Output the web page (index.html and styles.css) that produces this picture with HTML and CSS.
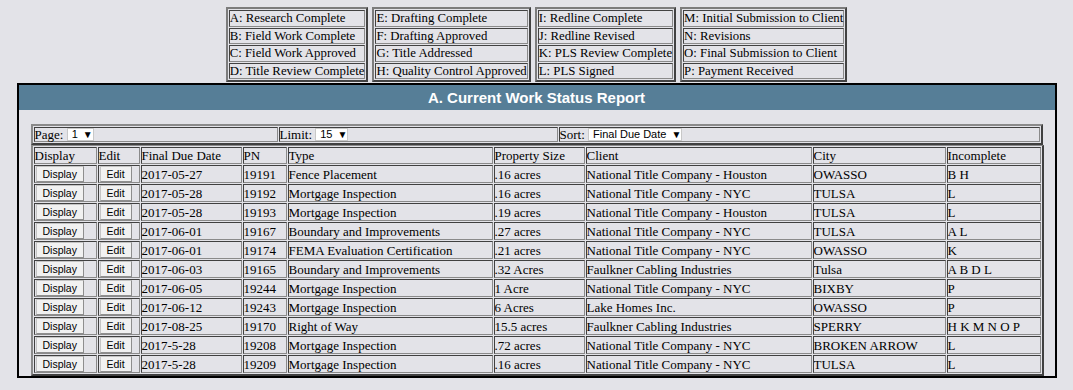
FILE: index.html
```html
<!DOCTYPE html>
<html>
<head>
<meta charset="utf-8">
<title>Current Work Status Report</title>
<link rel="stylesheet" href="styles.css">
</head>
<body>
<div class="legend">
  <table class="key">
    <tr><td>A: Research Complete</td></tr>
    <tr><td>B: Field Work Complete</td></tr>
    <tr><td>C: Field Work Approved</td></tr>
    <tr><td>D: Title Review Complete</td></tr>
  </table>
  <table class="key">
    <tr><td>E: Drafting Complete</td></tr>
    <tr><td>F: Drafting Approved</td></tr>
    <tr><td>G: Title Addressed</td></tr>
    <tr><td>H: Quality Control Approved</td></tr>
  </table>
  <table class="key">
    <tr><td>I: Redline Complete</td></tr>
    <tr><td>J: Redline Revised</td></tr>
    <tr><td>K: PLS Review Complete</td></tr>
    <tr><td>L: PLS Signed</td></tr>
  </table>
  <table class="key">
    <tr><td>M: Initial Submission to Client</td></tr>
    <tr><td>N: Revisions</td></tr>
    <tr><td>O: Final Submission to Client</td></tr>
    <tr><td>P: Payment Received</td></tr>
  </table>
</div>

<div class="report">
  <div class="report-title">A. Current Work Status Report</div>
  <div class="report-body">
    <table class="nav">
      <tr>
        <td class="nav-page">Page: <span class="select sel-page">1 <span class="arrow">▼</span></span></td>
        <td class="nav-limit">Limit: <span class="select sel-limit">15 <span class="arrow">▼</span></span></td>
        <td class="nav-sort">Sort: <span class="select sel-sort">Final Due Date <span class="arrow">▼</span></span></td>
      </tr>
    </table>
    <table class="grid">
      <colgroup>
        <col class="c-display"><col class="c-edit"><col class="c-date"><col class="c-pn"><col class="c-type"><col class="c-size"><col class="c-client"><col class="c-city"><col class="c-inc">
      </colgroup>
      <tr><td>Display</td><td>Edit</td><td>Final Due Date</td><td>PN</td><td>Type</td><td>Property Size</td><td>Client</td><td>City</td><td>Incomplete</td></tr>
      <tr><td><button class="btn">Display</button></td><td><button class="btn">Edit</button></td><td>2017-05-27</td><td>19191</td><td>Fence Placement</td><td>.16 acres</td><td>National Title Company - Houston</td><td>OWASSO</td><td>B H</td></tr>
      <tr><td><button class="btn">Display</button></td><td><button class="btn">Edit</button></td><td>2017-05-28</td><td>19192</td><td>Mortgage Inspection</td><td>.16 acres</td><td>National Title Company - NYC</td><td>TULSA</td><td>L</td></tr>
      <tr><td><button class="btn">Display</button></td><td><button class="btn">Edit</button></td><td>2017-05-28</td><td>19193</td><td>Mortgage Inspection</td><td>.19 acres</td><td>National Title Company - Houston</td><td>TULSA</td><td>L</td></tr>
      <tr><td><button class="btn">Display</button></td><td><button class="btn">Edit</button></td><td>2017-06-01</td><td>19167</td><td>Boundary and Improvements</td><td>.27 acres</td><td>National Title Company - NYC</td><td>TULSA</td><td>A L</td></tr>
      <tr><td><button class="btn">Display</button></td><td><button class="btn">Edit</button></td><td>2017-06-01</td><td>19174</td><td>FEMA Evaluation Certification</td><td>.21 acres</td><td>National Title Company - NYC</td><td>OWASSO</td><td>K</td></tr>
      <tr><td><button class="btn">Display</button></td><td><button class="btn">Edit</button></td><td>2017-06-03</td><td>19165</td><td>Boundary and Improvements</td><td>.32 Acres</td><td>Faulkner Cabling Industries</td><td>Tulsa</td><td>A B D L</td></tr>
      <tr><td><button class="btn">Display</button></td><td><button class="btn">Edit</button></td><td>2017-06-05</td><td>19244</td><td>Mortgage Inspection</td><td>1 Acre</td><td>National Title Company - NYC</td><td>BIXBY</td><td>P</td></tr>
      <tr><td><button class="btn">Display</button></td><td><button class="btn">Edit</button></td><td>2017-06-12</td><td>19243</td><td>Mortgage Inspection</td><td>6 Acres</td><td>Lake Homes Inc.</td><td>OWASSO</td><td>P</td></tr>
      <tr><td><button class="btn">Display</button></td><td><button class="btn">Edit</button></td><td>2017-08-25</td><td>19170</td><td>Right of Way</td><td>15.5 acres</td><td>Faulkner Cabling Industries</td><td>SPERRY</td><td>H K M N O P</td></tr>
      <tr><td><button class="btn">Display</button></td><td><button class="btn">Edit</button></td><td>2017-5-28</td><td>19208</td><td>Mortgage Inspection</td><td>.72 acres</td><td>National Title Company - NYC</td><td>BROKEN ARROW</td><td>L</td></tr>
      <tr><td><button class="btn">Display</button></td><td><button class="btn">Edit</button></td><td>2017-5-28</td><td>19209</td><td>Mortgage Inspection</td><td>.16 acres</td><td>National Title Company - NYC</td><td>TULSA</td><td>L</td></tr>
    </table>
  </div>
</div>
</body>
</html>
```

FILE: styles.css
```css
html, body {
  margin: 0;
  padding: 0;
}
body {
  padding-top: 7px;
  background: #e3e3e8;
  color: #000;
  font-family: "Liberation Serif", "Times New Roman", serif;
  font-size: 13px;
}

/* Status key legend */
.legend {
  display: flex;
  justify-content: center;
  align-items: flex-start;
  gap: 4px;
}
.key {
  border: 2px solid;
  border-color: #7c7c7c #424242 #424242 #7c7c7c;
  border-spacing: 1px;
  font-size: 12.8px;
}
.key td {
  border: 1px solid;
  border-color: #424242 #8a8a8a #8a8a8a #424242;
  padding: 0;
  height: 14.5px;
  line-height: 14.5px;
  white-space: nowrap;
}

/* Report box */
.report {
  width: 1036px;
  margin: 1px auto 0;
  border: 2px solid #000;
}
.report-title {
  background: #567e97;
  color: #fff;
  font-family: "Liberation Sans", Arial, sans-serif;
  font-weight: bold;
  font-size: 15px;
  height: 25px;
  line-height: 25px;
  text-align: center;
}
.report-body {
  padding: 14px 12px 0;
}

.nav,
.grid {
  width: 100%;
  border: 2px solid;
  border-color: #8a8a8a #404040 #404040 #8a8a8a;
  border-spacing: 1px;
}
.grid {
  table-layout: fixed;
  border-top-width: 1px;
}
.nav td,
.grid td {
  border: 1px solid;
  border-color: #404040 #8a8a8a #8a8a8a #404040;
  padding: 0;
  white-space: nowrap;
}
.nav td {
  height: 13px;
  line-height: 13px;
}
.grid td {
  height: 15px;
  line-height: 15px;
  overflow: hidden;
}
.nav-page { width: 242px; }
.nav-limit { width: 277px; }

.c-display { width: 63px; }
.c-edit { width: 42px; }
.c-date { width: 101px; }
.c-pn { width: 44px; }
.c-type { width: 205px; }
.c-size { width: 91px; }
.c-client { width: 226px; }
.c-city { width: 133px; }
.c-inc { width: 94px; }

/* Select boxes */
.select {
  display: inline-block;
  box-sizing: border-box;
  height: 13px;
  line-height: 11px;
  vertical-align: top;
  background: #fff;
  border: 1px solid #c8c8c8;
  padding: 0 4px;
  font-family: "Liberation Sans", Arial, sans-serif;
  font-size: 11px;
  color: #000;
}
.select .arrow {
  font-size: 10px;
  margin-left: 2px;
}
.sel-page { width: 27px; }
.sel-limit { width: 33px; }
.sel-sort { width: 94px; }

/* Row buttons */
.btn {
  display: inline-block;
  box-sizing: border-box;
  height: 16px;
  margin: 0 0 0 1px;
  padding: 0 6px;
  vertical-align: top;
  background: #f1f1f1;
  border: 1px solid;
  border-color: #c4c4c4 #8e8e8e #8e8e8e #c4c4c4;
  border-radius: 0;
  font-family: "Liberation Sans", Arial, sans-serif;
  font-size: 10.5px;
  line-height: 13px;
  color: #000;
}
```
